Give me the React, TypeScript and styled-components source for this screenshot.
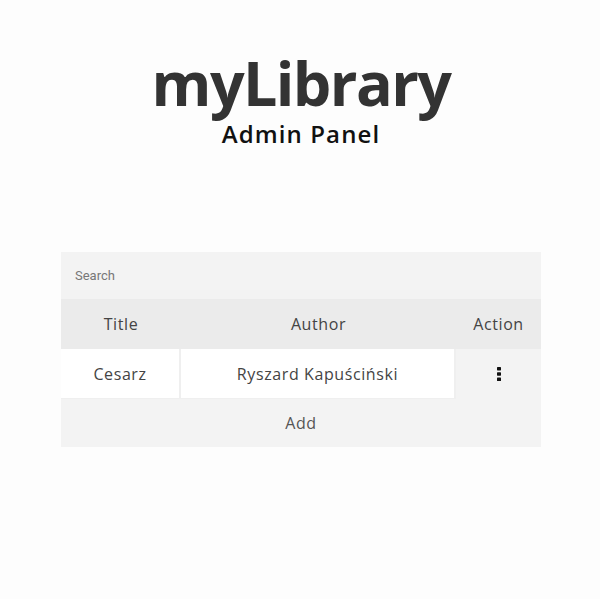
import React from "react";
import styled, { createGlobalStyle } from "styled-components";

const Global = createGlobalStyle`
  html, body { margin: 0; padding: 0; background: #fdfdfd; }
  body { font-family: "Open Sans", "Liberation Sans", sans-serif; }
`;

const Page = styled.div`
  display: flex;
  flex-direction: column;
  align-items: center;
  padding-top: 47px;
  padding-left: 2px;
`;

const Title = styled.h1`
  margin: 0;
  font-size: 61px;
  line-height: 72px;
  font-weight: 700;
  color: #333;
  letter-spacing: -1.6px;
`;

const Subtitle = styled.h2`
  margin: 3px 0 0;
  font-size: 24px;
  line-height: 24px;
  font-weight: 600;
  color: #111;
  letter-spacing: 1.1px;
`;

const Table = styled.div`
  width: 480px;
  margin-top: 106px;
  display: flex;
  flex-direction: column;
`;

const SearchInput = styled.input`
  height: 47px;
  border: none;
  outline: none;
  background: #f3f3f3;
  padding: 0 14px;
  font-family: Roboto, "Liberation Sans", sans-serif;
  font-size: 13px;
  color: #555;
  &::placeholder { color: #777; }
`;

const Row = styled.div<{ $bg: string; $h: number }>`
  display: grid;
  grid-template-columns: 120px 275px 85px;
  height: ${(p) => p.$h}px;
  background: ${(p) => p.$bg};
`;

const Cell = styled.div<{ $bg?: string; $border?: boolean }>`
  display: flex;
  align-items: center;
  justify-content: center;
  font-size: 16px;
  letter-spacing: 0.6px;
  color: #444;
  background: ${(p) => p.$bg || "transparent"};
  box-sizing: border-box;
  ${(p) => (p.$border ? "border-right: 2px solid #efefef; border-bottom: 1px solid #efefef;" : "")}
`;

const AddButton = styled.button`
  height: 48px;
  border: none;
  background: #f3f3f3;
  font-family: "Open Sans", "Liberation Sans", sans-serif;
  font-size: 16px;
  letter-spacing: 0.6px;
  color: #555;
  cursor: pointer;
`;

const Dots = () => (
  <svg width="6" height="14" viewBox="0 0 6 14">
    <rect x="1" y="0" width="4" height="3.4" rx="0.6" fill="#111" />
    <rect x="1" y="5.3" width="4" height="3.4" rx="0.6" fill="#111" />
    <rect x="1" y="10.6" width="4" height="3.4" rx="0.6" fill="#111" />
  </svg>
);

export default function App() {
  return (
    <>
      <Global />
      <Page>
        <Title>myLibrary</Title>
        <Subtitle>Admin Panel</Subtitle>
        <Table>
          <SearchInput placeholder="Search" />
          <Row $bg="#ebebeb" $h={50}>
            <Cell>Title</Cell>
            <Cell>Author</Cell>
            <Cell>Action</Cell>
          </Row>
          <Row $bg="#f3f3f3" $h={50}>
            <Cell $bg="#ffffff" $border>Cesarz</Cell>
            <Cell $bg="#ffffff" $border>Ryszard Kapuściński</Cell>
            <Cell $bg="#f3f3f3"><Dots /></Cell>
          </Row>
          <AddButton>Add</AddButton>
        </Table>
      </Page>
    </>
  );
}
